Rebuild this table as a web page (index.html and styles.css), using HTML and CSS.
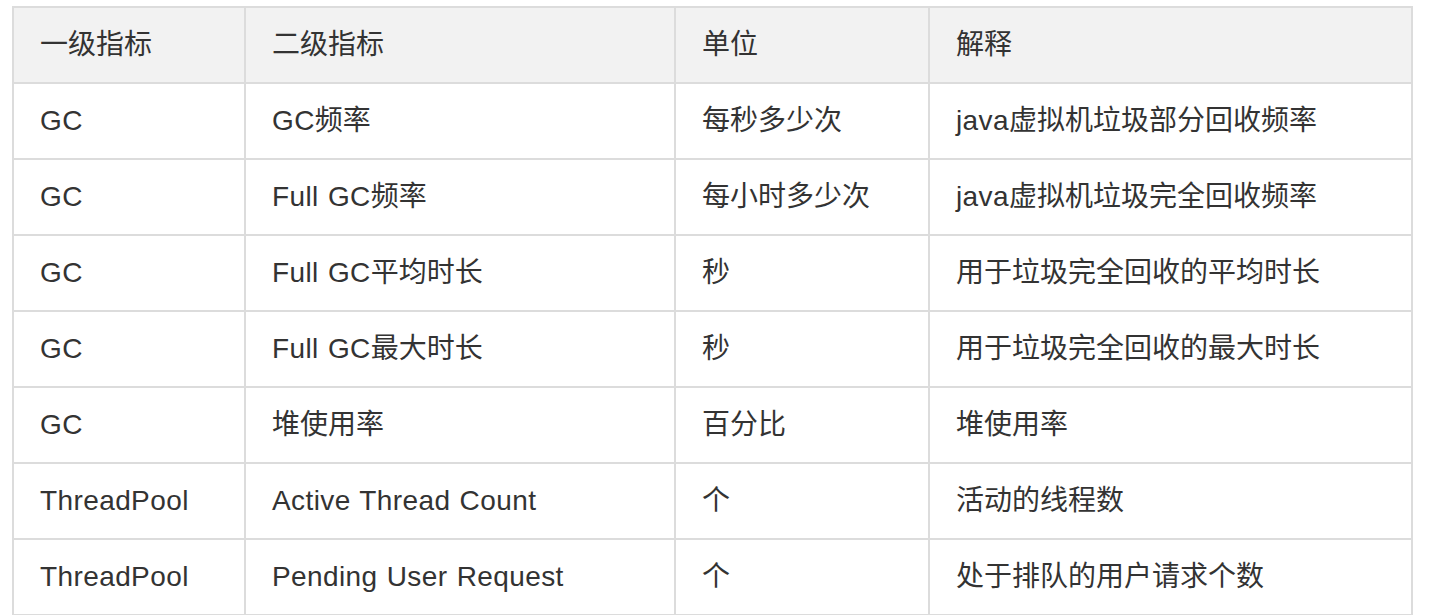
FILE: index.html
```html
<!DOCTYPE html>
<html lang="zh-CN">
<head>
<meta charset="utf-8">
<title>指标</title>
<link rel="stylesheet" href="styles.css">
</head>
<body>
<table class="metrics">
  <colgroup>
    <col class="c1"><col class="c2"><col class="c3"><col class="c4">
  </colgroup>
  <thead>
    <tr><th>一级指标</th><th>二级指标</th><th>单位</th><th>解释</th></tr>
  </thead>
  <tbody>
    <tr><td><span class="lat">GC</span></td><td><span class="lat">GC</span>频率</td><td>每秒多少次</td><td><span class="lat">java</span>虚拟机垃圾部分回收频率</td></tr>
    <tr><td><span class="lat">GC</span></td><td><span class="lat">Full GC</span>频率</td><td>每小时多少次</td><td><span class="lat">java</span>虚拟机垃圾完全回收频率</td></tr>
    <tr><td><span class="lat">GC</span></td><td><span class="lat">Full GC</span>平均时长</td><td>秒</td><td>用于垃圾完全回收的平均时长</td></tr>
    <tr><td><span class="lat">GC</span></td><td><span class="lat">Full GC</span>最大时长</td><td>秒</td><td>用于垃圾完全回收的最大时长</td></tr>
    <tr><td><span class="lat">GC</span></td><td>堆使用率</td><td>百分比</td><td>堆使用率</td></tr>
    <tr><td><span class="lat">ThreadPool</span></td><td><span class="lat">Active Thread Count</span></td><td>个</td><td>活动的线程数</td></tr>
    <tr><td><span class="lat">ThreadPool</span></td><td><span class="lat">Pending User Request</span></td><td>个</td><td>处于排队的用户请求个数</td></tr>
  </tbody>
</table>
</body>
</html>
```
FILE: styles.css
```css
html, body {
  margin: 0;
  padding: 0;
  background: #fff;
}
body {
  font-family: "Liberation Sans", "Noto Sans CJK SC", sans-serif;
  color: #333;
}
.metrics {
  border-collapse: collapse;
  table-layout: fixed;
  width: 1399px;
  margin: 6px 0 0 12px;
  border: 2px solid #dcdcdc;
}
.metrics .c1 { width: 232px; }
.metrics .c2 { width: 430px; }
.metrics .c3 { width: 254px; }
.metrics .c4 { width: 483px; }
.metrics th,
.metrics td {
  border: 2px solid #dcdcdc;
  padding: 17px 26px;
  height: 40px;
  line-height: 40px;
  font-size: 28px;
  font-weight: normal;
  text-align: left;
  vertical-align: middle;
  white-space: nowrap;
}
.metrics thead th {
  background: #f2f2f2;
}
.lat {
  letter-spacing: 0.4px;
  word-spacing: 1px;
}
```
